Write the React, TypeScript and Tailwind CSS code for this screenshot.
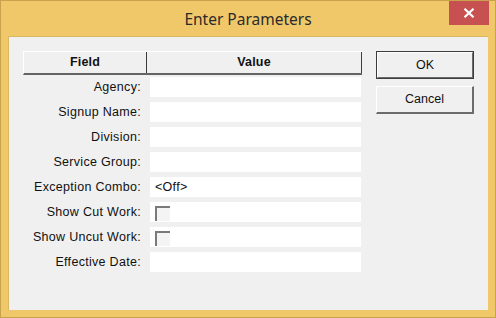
import React from "react";

const rows: { label: string; kind: "text" | "check"; value?: string }[] = [
  { label: "Agency:", kind: "text" },
  { label: "Signup Name:", kind: "text" },
  { label: "Division:", kind: "text" },
  { label: "Service Group:", kind: "text" },
  { label: "Exception Combo:", kind: "text", value: "<Off>" },
  { label: "Show Cut Work:", kind: "check" },
  { label: "Show Uncut Work:", kind: "check" },
  { label: "Effective Date:", kind: "text" },
];

export default function App() {
  return (
    <div
      className="w-[496px] h-[318px] bg-[#f0c86a] border border-[#c9a24e] flex flex-col overflow-hidden"
      style={{ fontFamily: '"Liberation Sans", Arial, sans-serif' }}
    >
      <div className="relative h-[35px] flex items-center justify-center shrink-0">
        <span
          className="text-[15.5px] text-[#2b2b2b] pt-[3px]"
          style={{ fontFamily: '"Noto Sans", "Open Sans", sans-serif' }}
        >
          Enter Parameters
        </span>
        <div className="absolute top-0 right-[6px] w-[40px] h-[24px] bg-[#c75050] flex items-center justify-center">
          <svg width="12" height="10" viewBox="0 0 12 10">
            <path d="M1.5 0.8 L10.5 9.2 M10.5 0.8 L1.5 9.2" stroke="#fff" strokeWidth="2.2" />
          </svg>
        </div>
      </div>
      <div className="mx-[7px] mb-[7px] flex-1 bg-[#f0f0f0] border-l border-t border-[#d9b860] flex pl-[14px] pt-[14px]">
        <div className="w-[339px] flex flex-col">
          <div className="h-[24px] flex border-t border-l border-white border-b-2 border-b-[#646464] text-[12.5px] font-bold text-[#111] tracking-[0.2px]">
            <div className="w-[123px] flex items-center justify-center border-r border-[#3c3c3c]">Field</div>
            <div className="flex-1 flex items-center justify-center border-r border-[#3c3c3c]">Value</div>
          </div>
          <div className="flex flex-col gap-[5px] pt-[2px]">
            {rows.map((r) => (
              <div key={r.label} className="flex h-[20px] text-[12.5px] text-[#111] tracking-[0.3px]">
                <div className="w-[124px] pr-[6px] flex items-center justify-end">{r.label}</div>
                <div className="ml-[3px] w-[211px] bg-white flex items-center pl-[5px]">
                  {r.kind === "check" ? (
                    <div className="w-[15px] h-[15px] border-t-2 border-l-2 border-[#7a7a7a] bg-[#f4f4f4] mt-[3px]" />
                  ) : (
                    r.value
                  )}
                </div>
              </div>
            ))}
          </div>
        </div>
        <div className="ml-[14px] flex flex-col gap-[7px]">
          <div className="w-[98px] h-[28px] border border-[#3c3c3c] flex">
            <div className="flex-1 border-t border-l border-white border-r border-b border-r-[#6b6b6b] border-b-[#6b6b6b] flex items-center justify-center text-[12.5px] text-[#111]">
              OK
            </div>
          </div>
          <div className="w-[98px] h-[28px] border-t border-l border-white border-r-2 border-b-2 border-r-[#6b6b6b] border-b-[#6b6b6b] flex items-center justify-center text-[12.5px] text-[#111]">
            Cancel
          </div>
        </div>
      </div>
    </div>
  );
}
